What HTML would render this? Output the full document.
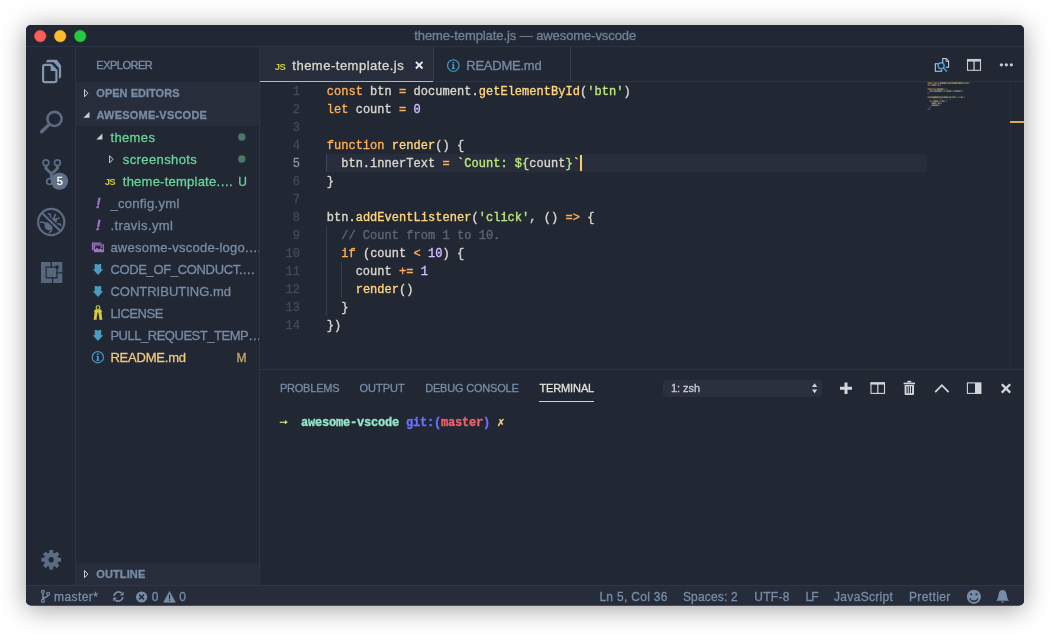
<!DOCTYPE html>
<html lang="en"><head><meta charset="utf-8"><title>theme-template.js — awesome-vscode</title>
<style>
*{margin:0;padding:0;box-sizing:border-box}
html,body{width:1050px;height:634px;overflow:hidden;background:#fff}
body{position:relative;font-family:"Liberation Sans", sans-serif;-webkit-font-smoothing:antialiased}
.abs,.t,.ln,.cl{position:absolute}
.t{white-space:nowrap;display:block;height:20px;line-height:20px;font-family:"Liberation Sans", sans-serif}
#root{position:absolute;left:0;top:0;width:1050px;height:634px;will-change:transform;-webkit-text-stroke:0.3px}
#win{position:absolute;left:26px;top:25px;width:998px;height:580.5px;border-radius:5px;background:#212733;overflow:hidden;}
#shadow{position:absolute;left:26px;top:25px;width:998px;height:580px;background:#212733;border-radius:5px;box-shadow:0 3.5px 26px rgba(0,0,0,.38);}
.ln{left:270px;width:30px;height:18px;text-align:right;font:400 12px/18px "Liberation Mono", "DejaVu Sans Mono", monospace;color:#414b5c}
.ln.act{color:#8c939e}
.cl{left:326.7px;height:18px;font:400 12px/18px "Liberation Mono", "DejaVu Sans Mono", monospace;white-space:pre;letter-spacing:0.035px;color:#d9d7ce;-webkit-text-stroke:0.35px}
.term{font:700 12px/18px "Liberation Mono", "DejaVu Sans Mono", monospace;white-space:pre;letter-spacing:-0.2px}
</style></head>
<body>
<div id="root">
<div id="shadow"></div>
<svg class="abs" style="left:0;top:0" width="1050" height="634"><rect x="26" y="25" width="998" height="580.5" rx="5" fill="#212733"/></svg>
<!-- chrome lines / panels (page coordinates) -->
<div class="abs" style="left:26px;top:46px;width:998px;height:1px;background:#2d3544"></div>
<div class="abs" style="left:75px;top:47px;width:1px;height:538px;background:#2d3544"></div>
<div class="abs" style="left:259px;top:47px;width:1px;height:538px;background:#2d3544"></div>
<div class="abs" style="left:76px;top:82px;width:183px;height:44px;background:#272d3a"></div>
<div class="abs" style="left:76px;top:563px;width:183px;height:22px;background:#272d3a"></div>
<!-- tabs -->
<div class="abs" style="left:260px;top:47px;width:173px;height:34px;background:#272d3a"></div>
<div class="abs" style="left:433px;top:47px;width:1px;height:35px;background:#343e4f"></div>
<div class="abs" style="left:570px;top:47px;width:1px;height:35px;background:#343e4f"></div>
<div class="abs" style="left:260px;top:81px;width:764px;height:1px;background:#2d3544"></div>
<div class="abs" style="left:260px;top:81px;width:173px;height:1px;background:#e6b450"></div>
<!-- editor -->
<div class="abs" style="left:326px;top:154px;width:601px;height:18px;background:#272d3a"></div>
<div class="abs" style="left:326px;top:154px;width:1px;height:18px;background:#3d4759"></div>
<div class="abs" style="left:326px;top:226px;width:1px;height:90px;background:#333d4e"></div>
<div class="abs" style="left:341px;top:262px;width:1px;height:36px;background:#333d4e"></div>
<div class="abs" style="left:579.5px;top:155px;width:2px;height:16px;background:#ffcc66"></div>
<div class="abs" style="left:1010px;top:82px;width:1px;height:287px;background:#272e3b"></div>
<div class="abs" style="left:1010px;top:121px;width:14px;height:2px;background:#dcab4e"></div>
<div class="ln" style="top:83px">1</div>
<div class="cl" style="top:83px"><span style="color:#ffae57">const</span><span style="color:#d9d7ce"> btn </span><span style="color:#ffae57">=</span><span style="color:#d9d7ce"> document.</span><span style="color:#ffd57f">getElementById</span><span style="color:#d9d7ce">(</span><span style="color:#bbe67e">'btn'</span><span style="color:#d9d7ce">)</span></div>
<div class="ln" style="top:101px">2</div>
<div class="cl" style="top:101px"><span style="color:#ffae57">let</span><span style="color:#d9d7ce"> count </span><span style="color:#ffae57">=</span><span style="color:#d9d7ce"> </span><span style="color:#d4bfff">0</span></div>
<div class="ln" style="top:119px">3</div>
<div class="ln" style="top:137px">4</div>
<div class="cl" style="top:137px"><span style="color:#ffae57">function</span><span style="color:#d9d7ce"> </span><span style="color:#ffd57f">render</span><span style="color:#d9d7ce">() {</span></div>
<div class="ln act" style="top:155px">5</div>
<div class="cl" style="top:155px"><span style="color:#d9d7ce">  btn.innerText </span><span style="color:#ffae57">=</span><span style="color:#d9d7ce"> </span><span style="color:#bbe67e">`Count: ${</span><span style="color:#d9d7ce">count</span><span style="color:#bbe67e">}`</span></div>
<div class="ln" style="top:173px">6</div>
<div class="cl" style="top:173px"><span style="color:#d9d7ce">}</span></div>
<div class="ln" style="top:191px">7</div>
<div class="ln" style="top:209px">8</div>
<div class="cl" style="top:209px"><span style="color:#d9d7ce">btn.</span><span style="color:#ffd57f">addEventListener</span><span style="color:#d9d7ce">(</span><span style="color:#bbe67e">'click'</span><span style="color:#d9d7ce">, () </span><span style="color:#ffae57">=&gt;</span><span style="color:#d9d7ce"> {</span></div>
<div class="ln" style="top:227px">9</div>
<div class="cl" style="top:227px"><span style="color:#5c6773">  // Count from 1 to 10.</span></div>
<div class="ln" style="top:245px">10</div>
<div class="cl" style="top:245px"><span style="color:#d9d7ce">  </span><span style="color:#ffae57">if</span><span style="color:#d9d7ce"> (count </span><span style="color:#ffae57">&lt;</span><span style="color:#d9d7ce"> </span><span style="color:#d4bfff">10</span><span style="color:#d9d7ce">) {</span></div>
<div class="ln" style="top:263px">11</div>
<div class="cl" style="top:263px"><span style="color:#d9d7ce">    count </span><span style="color:#ffae57">+=</span><span style="color:#d9d7ce"> </span><span style="color:#d4bfff">1</span></div>
<div class="ln" style="top:281px">12</div>
<div class="cl" style="top:281px"><span style="color:#d9d7ce">    </span><span style="color:#ffd57f">render</span><span style="color:#d9d7ce">()</span></div>
<div class="ln" style="top:299px">13</div>
<div class="cl" style="top:299px"><span style="color:#d9d7ce">  }</span></div>
<div class="ln" style="top:317px">14</div>
<div class="cl" style="top:317px"><span style="color:#d9d7ce">})</span></div>
<svg class="abs" style="left:0;top:0" width="1050" height="634"><rect x="927.70" y="82.30" width="0.80" height="1.5" fill="#ffae57" opacity="0.72"/><rect x="928.70" y="82.30" width="0.80" height="1.5" fill="#ffae57" opacity="0.72"/><rect x="929.70" y="82.30" width="0.80" height="1.5" fill="#ffae57" opacity="0.72"/><rect x="930.70" y="82.30" width="0.80" height="1.5" fill="#ffae57" opacity="0.72"/><rect x="931.70" y="82.30" width="0.80" height="1.5" fill="#ffae57" opacity="0.42"/><rect x="933.70" y="82.30" width="0.80" height="1.5" fill="#d9d7ce" opacity="0.72"/><rect x="934.70" y="82.30" width="0.80" height="1.5" fill="#d9d7ce" opacity="0.42"/><rect x="935.70" y="82.30" width="0.80" height="1.5" fill="#d9d7ce" opacity="0.72"/><rect x="937.70" y="82.30" width="0.80" height="1.5" fill="#ffae57" opacity="0.95"/><rect x="939.70" y="82.30" width="0.80" height="1.5" fill="#d9d7ce" opacity="0.72"/><rect x="940.70" y="82.30" width="0.80" height="1.5" fill="#d9d7ce" opacity="0.72"/><rect x="941.70" y="82.30" width="0.80" height="1.5" fill="#d9d7ce" opacity="0.72"/><rect x="942.70" y="82.30" width="0.80" height="1.5" fill="#d9d7ce" opacity="0.72"/><rect x="943.70" y="82.30" width="0.80" height="1.5" fill="#d9d7ce" opacity="0.95"/><rect x="944.70" y="82.30" width="0.80" height="1.5" fill="#d9d7ce" opacity="0.72"/><rect x="945.70" y="82.30" width="0.80" height="1.5" fill="#d9d7ce" opacity="0.72"/><rect x="946.70" y="82.30" width="0.80" height="1.5" fill="#d9d7ce" opacity="0.42"/><rect x="947.70" y="82.30" width="0.80" height="1.5" fill="#d9d7ce" opacity="0.42"/><rect x="948.70" y="82.30" width="0.80" height="1.5" fill="#ffd57f" opacity="0.72"/><rect x="949.70" y="82.30" width="0.80" height="1.5" fill="#ffd57f" opacity="0.72"/><rect x="950.70" y="82.30" width="0.80" height="1.5" fill="#ffd57f" opacity="0.42"/><rect x="951.70" y="82.30" width="0.80" height="1.5" fill="#ffd57f" opacity="0.95"/><rect x="952.70" y="82.30" width="0.80" height="1.5" fill="#ffd57f" opacity="0.42"/><rect x="953.70" y="82.30" width="0.80" height="1.5" fill="#ffd57f" opacity="0.72"/><rect x="954.70" y="82.30" width="0.80" height="1.5" fill="#ffd57f" opacity="0.95"/><rect x="955.70" y="82.30" width="0.80" height="1.5" fill="#ffd57f" opacity="0.72"/><rect x="956.70" y="82.30" width="0.80" height="1.5" fill="#ffd57f" opacity="0.72"/><rect x="957.70" y="82.30" width="0.80" height="1.5" fill="#ffd57f" opacity="0.42"/><rect x="958.70" y="82.30" width="0.80" height="1.5" fill="#ffd57f" opacity="0.95"/><rect x="959.70" y="82.30" width="0.80" height="1.5" fill="#ffd57f" opacity="0.72"/><rect x="960.70" y="82.30" width="0.80" height="1.5" fill="#ffd57f" opacity="0.72"/><rect x="961.70" y="82.30" width="0.80" height="1.5" fill="#ffd57f" opacity="0.72"/><rect x="962.70" y="82.30" width="0.80" height="1.5" fill="#d9d7ce" opacity="0.42"/><rect x="963.70" y="82.30" width="0.80" height="1.5" fill="#bbe67e" opacity="0.42"/><rect x="964.70" y="82.30" width="0.80" height="1.5" fill="#bbe67e" opacity="0.72"/><rect x="965.70" y="82.30" width="0.80" height="1.5" fill="#bbe67e" opacity="0.42"/><rect x="966.70" y="82.30" width="0.80" height="1.5" fill="#bbe67e" opacity="0.72"/><rect x="967.70" y="82.30" width="0.80" height="1.5" fill="#bbe67e" opacity="0.42"/><rect x="968.70" y="82.30" width="0.80" height="1.5" fill="#d9d7ce" opacity="0.42"/><rect x="927.70" y="84.32" width="0.80" height="1.5" fill="#ffae57" opacity="0.42"/><rect x="928.70" y="84.32" width="0.80" height="1.5" fill="#ffae57" opacity="0.72"/><rect x="929.70" y="84.32" width="0.80" height="1.5" fill="#ffae57" opacity="0.42"/><rect x="931.70" y="84.32" width="0.80" height="1.5" fill="#d9d7ce" opacity="0.72"/><rect x="932.70" y="84.32" width="0.80" height="1.5" fill="#d9d7ce" opacity="0.72"/><rect x="933.70" y="84.32" width="0.80" height="1.5" fill="#d9d7ce" opacity="0.72"/><rect x="934.70" y="84.32" width="0.80" height="1.5" fill="#d9d7ce" opacity="0.72"/><rect x="935.70" y="84.32" width="0.80" height="1.5" fill="#d9d7ce" opacity="0.42"/><rect x="937.70" y="84.32" width="0.80" height="1.5" fill="#ffae57" opacity="0.95"/><rect x="939.70" y="84.32" width="0.80" height="1.5" fill="#d4bfff" opacity="0.72"/><rect x="927.70" y="88.36" width="0.80" height="1.5" fill="#ffae57" opacity="0.72"/><rect x="928.70" y="88.36" width="0.80" height="1.5" fill="#ffae57" opacity="0.72"/><rect x="929.70" y="88.36" width="0.80" height="1.5" fill="#ffae57" opacity="0.72"/><rect x="930.70" y="88.36" width="0.80" height="1.5" fill="#ffae57" opacity="0.72"/><rect x="931.70" y="88.36" width="0.80" height="1.5" fill="#ffae57" opacity="0.42"/><rect x="932.70" y="88.36" width="0.80" height="1.5" fill="#ffae57" opacity="0.42"/><rect x="933.70" y="88.36" width="0.80" height="1.5" fill="#ffae57" opacity="0.72"/><rect x="934.70" y="88.36" width="0.80" height="1.5" fill="#ffae57" opacity="0.72"/><rect x="936.70" y="88.36" width="0.80" height="1.5" fill="#ffd57f" opacity="0.72"/><rect x="937.70" y="88.36" width="0.80" height="1.5" fill="#ffd57f" opacity="0.72"/><rect x="938.70" y="88.36" width="0.80" height="1.5" fill="#ffd57f" opacity="0.72"/><rect x="939.70" y="88.36" width="0.80" height="1.5" fill="#ffd57f" opacity="0.72"/><rect x="940.70" y="88.36" width="0.80" height="1.5" fill="#ffd57f" opacity="0.72"/><rect x="941.70" y="88.36" width="0.80" height="1.5" fill="#ffd57f" opacity="0.72"/><rect x="942.70" y="88.36" width="0.80" height="1.5" fill="#d9d7ce" opacity="0.42"/><rect x="943.70" y="88.36" width="0.80" height="1.5" fill="#d9d7ce" opacity="0.42"/><rect x="945.70" y="88.36" width="0.80" height="1.5" fill="#d9d7ce" opacity="0.42"/><rect x="929.70" y="90.38" width="0.80" height="1.5" fill="#d9d7ce" opacity="0.72"/><rect x="930.70" y="90.38" width="0.80" height="1.5" fill="#d9d7ce" opacity="0.42"/><rect x="931.70" y="90.38" width="0.80" height="1.5" fill="#d9d7ce" opacity="0.72"/><rect x="932.70" y="90.38" width="0.80" height="1.5" fill="#d9d7ce" opacity="0.42"/><rect x="933.70" y="90.38" width="0.80" height="1.5" fill="#d9d7ce" opacity="0.42"/><rect x="934.70" y="90.38" width="0.80" height="1.5" fill="#d9d7ce" opacity="0.72"/><rect x="935.70" y="90.38" width="0.80" height="1.5" fill="#d9d7ce" opacity="0.72"/><rect x="936.70" y="90.38" width="0.80" height="1.5" fill="#d9d7ce" opacity="0.72"/><rect x="937.70" y="90.38" width="0.80" height="1.5" fill="#d9d7ce" opacity="0.72"/><rect x="938.70" y="90.38" width="0.80" height="1.5" fill="#d9d7ce" opacity="0.72"/><rect x="939.70" y="90.38" width="0.80" height="1.5" fill="#d9d7ce" opacity="0.72"/><rect x="940.70" y="90.38" width="0.80" height="1.5" fill="#d9d7ce" opacity="0.72"/><rect x="941.70" y="90.38" width="0.80" height="1.5" fill="#d9d7ce" opacity="0.42"/><rect x="943.70" y="90.38" width="0.80" height="1.5" fill="#ffae57" opacity="0.95"/><rect x="945.70" y="90.38" width="0.80" height="1.5" fill="#bbe67e" opacity="0.42"/><rect x="946.70" y="90.38" width="0.80" height="1.5" fill="#bbe67e" opacity="0.72"/><rect x="947.70" y="90.38" width="0.80" height="1.5" fill="#bbe67e" opacity="0.72"/><rect x="948.70" y="90.38" width="0.80" height="1.5" fill="#bbe67e" opacity="0.72"/><rect x="949.70" y="90.38" width="0.80" height="1.5" fill="#bbe67e" opacity="0.72"/><rect x="950.70" y="90.38" width="0.80" height="1.5" fill="#bbe67e" opacity="0.42"/><rect x="951.70" y="90.38" width="0.80" height="1.5" fill="#bbe67e" opacity="0.42"/><rect x="953.70" y="90.38" width="0.80" height="1.5" fill="#bbe67e" opacity="0.72"/><rect x="954.70" y="90.38" width="0.80" height="1.5" fill="#bbe67e" opacity="0.42"/><rect x="955.70" y="90.38" width="0.80" height="1.5" fill="#d9d7ce" opacity="0.72"/><rect x="956.70" y="90.38" width="0.80" height="1.5" fill="#d9d7ce" opacity="0.72"/><rect x="957.70" y="90.38" width="0.80" height="1.5" fill="#d9d7ce" opacity="0.72"/><rect x="958.70" y="90.38" width="0.80" height="1.5" fill="#d9d7ce" opacity="0.72"/><rect x="959.70" y="90.38" width="0.80" height="1.5" fill="#d9d7ce" opacity="0.42"/><rect x="960.70" y="90.38" width="0.80" height="1.5" fill="#bbe67e" opacity="0.42"/><rect x="961.70" y="90.38" width="0.80" height="1.5" fill="#bbe67e" opacity="0.42"/><rect x="927.70" y="92.40" width="0.80" height="1.5" fill="#d9d7ce" opacity="0.42"/><rect x="927.70" y="96.44" width="0.80" height="1.5" fill="#d9d7ce" opacity="0.72"/><rect x="928.70" y="96.44" width="0.80" height="1.5" fill="#d9d7ce" opacity="0.42"/><rect x="929.70" y="96.44" width="0.80" height="1.5" fill="#d9d7ce" opacity="0.72"/><rect x="930.70" y="96.44" width="0.80" height="1.5" fill="#d9d7ce" opacity="0.42"/><rect x="931.70" y="96.44" width="0.80" height="1.5" fill="#ffd57f" opacity="0.72"/><rect x="932.70" y="96.44" width="0.80" height="1.5" fill="#ffd57f" opacity="0.72"/><rect x="933.70" y="96.44" width="0.80" height="1.5" fill="#ffd57f" opacity="0.72"/><rect x="934.70" y="96.44" width="0.80" height="1.5" fill="#ffd57f" opacity="0.95"/><rect x="935.70" y="96.44" width="0.80" height="1.5" fill="#ffd57f" opacity="0.72"/><rect x="936.70" y="96.44" width="0.80" height="1.5" fill="#ffd57f" opacity="0.72"/><rect x="937.70" y="96.44" width="0.80" height="1.5" fill="#ffd57f" opacity="0.72"/><rect x="938.70" y="96.44" width="0.80" height="1.5" fill="#ffd57f" opacity="0.42"/><rect x="939.70" y="96.44" width="0.80" height="1.5" fill="#ffd57f" opacity="0.72"/><rect x="940.70" y="96.44" width="0.80" height="1.5" fill="#ffd57f" opacity="0.42"/><rect x="941.70" y="96.44" width="0.80" height="1.5" fill="#ffd57f" opacity="0.72"/><rect x="942.70" y="96.44" width="0.80" height="1.5" fill="#ffd57f" opacity="0.42"/><rect x="943.70" y="96.44" width="0.80" height="1.5" fill="#ffd57f" opacity="0.72"/><rect x="944.70" y="96.44" width="0.80" height="1.5" fill="#ffd57f" opacity="0.72"/><rect x="945.70" y="96.44" width="0.80" height="1.5" fill="#ffd57f" opacity="0.72"/><rect x="946.70" y="96.44" width="0.80" height="1.5" fill="#ffd57f" opacity="0.72"/><rect x="947.70" y="96.44" width="0.80" height="1.5" fill="#d9d7ce" opacity="0.42"/><rect x="948.70" y="96.44" width="0.80" height="1.5" fill="#bbe67e" opacity="0.42"/><rect x="949.70" y="96.44" width="0.80" height="1.5" fill="#bbe67e" opacity="0.72"/><rect x="950.70" y="96.44" width="0.80" height="1.5" fill="#bbe67e" opacity="0.42"/><rect x="951.70" y="96.44" width="0.80" height="1.5" fill="#bbe67e" opacity="0.42"/><rect x="952.70" y="96.44" width="0.80" height="1.5" fill="#bbe67e" opacity="0.72"/><rect x="953.70" y="96.44" width="0.80" height="1.5" fill="#bbe67e" opacity="0.72"/><rect x="954.70" y="96.44" width="0.80" height="1.5" fill="#bbe67e" opacity="0.42"/><rect x="955.70" y="96.44" width="0.80" height="1.5" fill="#d9d7ce" opacity="0.42"/><rect x="957.70" y="96.44" width="0.80" height="1.5" fill="#d9d7ce" opacity="0.42"/><rect x="958.70" y="96.44" width="0.80" height="1.5" fill="#d9d7ce" opacity="0.42"/><rect x="960.70" y="96.44" width="0.80" height="1.5" fill="#ffae57" opacity="0.95"/><rect x="961.70" y="96.44" width="0.80" height="1.5" fill="#ffae57" opacity="0.72"/><rect x="963.70" y="96.44" width="0.80" height="1.5" fill="#d9d7ce" opacity="0.42"/><rect x="929.70" y="98.46" width="0.80" height="1.5" fill="#5c6773" opacity="0.25"/><rect x="930.70" y="98.46" width="0.80" height="1.5" fill="#5c6773" opacity="0.25"/><rect x="932.70" y="98.46" width="0.80" height="1.5" fill="#5c6773" opacity="0.43"/><rect x="933.70" y="98.46" width="0.80" height="1.5" fill="#5c6773" opacity="0.43"/><rect x="934.70" y="98.46" width="0.80" height="1.5" fill="#5c6773" opacity="0.43"/><rect x="935.70" y="98.46" width="0.80" height="1.5" fill="#5c6773" opacity="0.43"/><rect x="936.70" y="98.46" width="0.80" height="1.5" fill="#5c6773" opacity="0.25"/><rect x="938.70" y="98.46" width="0.80" height="1.5" fill="#5c6773" opacity="0.43"/><rect x="939.70" y="98.46" width="0.80" height="1.5" fill="#5c6773" opacity="0.43"/><rect x="940.70" y="98.46" width="0.80" height="1.5" fill="#5c6773" opacity="0.43"/><rect x="941.70" y="98.46" width="0.80" height="1.5" fill="#5c6773" opacity="0.57"/><rect x="943.70" y="98.46" width="0.80" height="1.5" fill="#5c6773" opacity="0.43"/><rect x="945.70" y="98.46" width="0.80" height="1.5" fill="#5c6773" opacity="0.25"/><rect x="946.70" y="98.46" width="0.80" height="1.5" fill="#5c6773" opacity="0.43"/><rect x="948.70" y="98.46" width="0.80" height="1.5" fill="#5c6773" opacity="0.43"/><rect x="949.70" y="98.46" width="0.80" height="1.5" fill="#5c6773" opacity="0.43"/><rect x="950.70" y="98.46" width="0.80" height="1.5" fill="#5c6773" opacity="0.25"/><rect x="929.70" y="100.48" width="0.80" height="1.5" fill="#ffae57" opacity="0.42"/><rect x="930.70" y="100.48" width="0.80" height="1.5" fill="#ffae57" opacity="0.72"/><rect x="932.70" y="100.48" width="0.80" height="1.5" fill="#d9d7ce" opacity="0.42"/><rect x="933.70" y="100.48" width="0.80" height="1.5" fill="#d9d7ce" opacity="0.72"/><rect x="934.70" y="100.48" width="0.80" height="1.5" fill="#d9d7ce" opacity="0.72"/><rect x="935.70" y="100.48" width="0.80" height="1.5" fill="#d9d7ce" opacity="0.72"/><rect x="936.70" y="100.48" width="0.80" height="1.5" fill="#d9d7ce" opacity="0.72"/><rect x="937.70" y="100.48" width="0.80" height="1.5" fill="#d9d7ce" opacity="0.42"/><rect x="939.70" y="100.48" width="0.80" height="1.5" fill="#ffae57" opacity="0.72"/><rect x="941.70" y="100.48" width="0.80" height="1.5" fill="#d4bfff" opacity="0.72"/><rect x="942.70" y="100.48" width="0.80" height="1.5" fill="#d4bfff" opacity="0.72"/><rect x="943.70" y="100.48" width="0.80" height="1.5" fill="#d9d7ce" opacity="0.42"/><rect x="945.70" y="100.48" width="0.80" height="1.5" fill="#d9d7ce" opacity="0.42"/><rect x="931.70" y="102.50" width="0.80" height="1.5" fill="#d9d7ce" opacity="0.72"/><rect x="932.70" y="102.50" width="0.80" height="1.5" fill="#d9d7ce" opacity="0.72"/><rect x="933.70" y="102.50" width="0.80" height="1.5" fill="#d9d7ce" opacity="0.72"/><rect x="934.70" y="102.50" width="0.80" height="1.5" fill="#d9d7ce" opacity="0.72"/><rect x="935.70" y="102.50" width="0.80" height="1.5" fill="#d9d7ce" opacity="0.42"/><rect x="937.70" y="102.50" width="0.80" height="1.5" fill="#ffae57" opacity="0.72"/><rect x="938.70" y="102.50" width="0.80" height="1.5" fill="#ffae57" opacity="0.95"/><rect x="940.70" y="102.50" width="0.80" height="1.5" fill="#d4bfff" opacity="0.72"/><rect x="931.70" y="104.52" width="0.80" height="1.5" fill="#ffd57f" opacity="0.72"/><rect x="932.70" y="104.52" width="0.80" height="1.5" fill="#ffd57f" opacity="0.72"/><rect x="933.70" y="104.52" width="0.80" height="1.5" fill="#ffd57f" opacity="0.72"/><rect x="934.70" y="104.52" width="0.80" height="1.5" fill="#ffd57f" opacity="0.72"/><rect x="935.70" y="104.52" width="0.80" height="1.5" fill="#ffd57f" opacity="0.72"/><rect x="936.70" y="104.52" width="0.80" height="1.5" fill="#ffd57f" opacity="0.72"/><rect x="937.70" y="104.52" width="0.80" height="1.5" fill="#d9d7ce" opacity="0.42"/><rect x="938.70" y="104.52" width="0.80" height="1.5" fill="#d9d7ce" opacity="0.42"/><rect x="929.70" y="106.54" width="0.80" height="1.5" fill="#d9d7ce" opacity="0.42"/><rect x="927.70" y="108.56" width="0.80" height="1.5" fill="#d9d7ce" opacity="0.42"/><rect x="928.70" y="108.56" width="0.80" height="1.5" fill="#d9d7ce" opacity="0.42"/></svg>
<!-- panel -->
<div class="abs" style="left:260px;top:369px;width:764px;height:1px;background:#2d3544"></div>
<div class="abs" style="left:539.4px;top:401px;width:54.8px;height:1px;background:#ffcc66"></div>
<div class="abs" style="left:663px;top:379.5px;width:159px;height:17.5px;border-radius:4px;background:#2a303d"></div>
<div class="abs term" style="left:280px;top:413px;height:18px;transform:translateY(0.7px)"><span style="color:#bbe67e;position:relative;top:-2px;-webkit-text-stroke:0.6px">→</span>  <span style="color:#95e6cb">awesome-vscode</span> <span style="color:#6871ff">git:(</span><span style="color:#f0616d">master</span><span style="color:#6871ff">)</span> <span style="color:#ffd57f">✗</span></div>
<!-- status bar -->
<svg class="abs" style="left:0;top:0" width="1050" height="634"><path d="M26 585 H1024 V600.5 A5 5 0 0 1 1019 605.5 H31 A5 5 0 0 1 26 600.5 Z" fill="#262c39"/></svg>
<div class="abs" style="left:26px;top:585px;width:998px;height:1px;background:#2f3847"></div>
<svg class="abs" style="left:0;top:0" width="1050" height="634" viewBox="0 0 1050 634" fill="none">
<!-- traffic lights -->
<circle cx="40.2" cy="36.1" r="5.85" fill="#fd5e57" stroke="#e2463f" stroke-width="0.5"/>
<circle cx="60.2" cy="36.1" r="5.85" fill="#febc2e" stroke="#e0a028" stroke-width="0.5"/>
<circle cx="80.2" cy="36.1" r="5.85" fill="#28c840" stroke="#1fab2f" stroke-width="0.5"/>
<!-- explorer icon -->
<g id="ic-files">
<path d="M43.1 66.6 Q43.1 64.9 44.8 64.9 L51 64.9 L56.4 70.6 L56.4 80.5 Q56.4 82.2 54.7 82.2 L44.8 82.2 Q43.1 82.2 43.1 80.5 Z" stroke="#8196b0" stroke-width="2.2" stroke-linejoin="round"/>
<path d="M50.6 64.9 L50.6 71 L56.4 71 Z" fill="#8196b0"/>
<path d="M47.2 59.8 L56.8 59.8 L61.1 65.6 L61.1 77 L58.9 79 L58.9 68 L53.6 62.3 L46 62.3 Z" fill="#8196b0"/>
</g>
<!-- search icon -->
<g id="ic-search" stroke="#5b6c84" stroke-linecap="round">
<circle cx="54.5" cy="118.9" r="7.05" stroke-width="2.6"/>
<path d="M49 124.6 L41.6 131.8" stroke-width="3.4"/>
</g>
<!-- git icon -->
<g id="ic-git" stroke="#5b6c84">
<circle cx="45.9" cy="162.8" r="2.9" stroke-width="1.7"/>
<circle cx="57.4" cy="162.8" r="2.9" stroke-width="1.7"/>
<circle cx="49.6" cy="181.6" r="2.9" stroke-width="1.7"/>
<path d="M45.9 166 L45.9 168.5 L51.4 173.6 L51.4 178.5 M57.4 166 L57.4 168.5 L51.9 173.6" stroke-width="3" stroke-linejoin="round"/>
</g>
<circle cx="59.5" cy="181.1" r="8.7" fill="#5f7088"/>
<!-- debug icon -->
<g id="ic-debug">
<g stroke="#5b6c84" stroke-width="1.5" stroke-linecap="round">
<path d="M40.6 222.3 L43.8 222.3 L45.6 223.8 M49.4 232.4 L51.4 230.8 L51.6 228.4 M48.2 213.8 L50.2 214.4 L50.8 217.6 M55.6 214.4 L54.2 217.4 M59 218 L56 219.2 M56.6 224 L60 224 L60.8 225.6"/>
</g>
<ellipse cx="48.6" cy="226.2" rx="3.9" ry="4.4" fill="#5b6c84" transform="rotate(-40 48.6 226.2)"/>
<ellipse cx="54" cy="220.6" rx="2.6" ry="3" fill="#5b6c84" transform="rotate(-40 54 220.6)"/>
<path d="M42.6 213.6 L59.8 230.4" stroke="#212733" stroke-width="5"/>
<path d="M41.8 212.8 L60.6 231.2" stroke="#5b6c84" stroke-width="2.3"/>
<circle cx="51.2" cy="222" r="13.1" stroke="#5b6c84" stroke-width="2.2"/>
</g>
<!-- extensions icon -->
<g id="ic-ext" fill="#56667c">
<path fill-rule="evenodd" d="M41 262 H62.3 V283 H41 Z M45.6 266.5 V278.4 H57.6 V266.5 Z"/>
<rect x="46.7" y="267.7" width="9.7" height="9.5"/>
</g>
<g fill="#212733">
<rect x="50.5" y="261.5" width="1.3" height="6.2"/>
<rect x="52" y="277.2" width="1.2" height="6.3"/>
<rect x="56.4" y="272.3" width="6.4" height="1.2"/>
<rect x="55.6" y="265.4" width="3" height="3.4"/>
</g>
<!-- gear -->
<g id="ic-gear" transform="translate(51.2 559.8)" fill="#5b6c84">
<path fill-rule="evenodd" d="M0 -7.2 A7.2 7.2 0 1 0 0.001 -7.2 Z M0 -2.7 A2.7 2.7 0 1 1 -0.001 -2.7 Z"/>
<g id="teeth">
<rect x="-2" y="-9.8" width="4" height="4" rx="0.6"/>
<rect x="-2" y="5.8" width="4" height="4" rx="0.6"/>
<rect x="-9.8" y="-2" width="4" height="4" rx="0.6"/>
<rect x="5.8" y="-2" width="4" height="4" rx="0.6"/>
<g transform="rotate(45)">
<rect x="-2" y="-9.8" width="4" height="4" rx="0.6"/>
<rect x="-2" y="5.8" width="4" height="4" rx="0.6"/>
<rect x="-9.8" y="-2" width="4" height="4" rx="0.6"/>
<rect x="5.8" y="-2" width="4" height="4" rx="0.6"/>
</g>
</g>
</g>

<path d="M84.5 89.60000000000001 L87.9 93.2 L84.5 96.8 Z" stroke="#cfcfcf" stroke-width="1" stroke-linejoin="round"/>
<path d="M89.5 111.8 L89.5 117.8 L83.4 117.8 Z" fill="#cfcfcf"/>
<path d="M102.4 133.60000000000002 L102.4 139.60000000000002 L96.30000000000001 139.60000000000002 Z" fill="#cfcfcf"/>
<path d="M109.6 155.70000000000002 L113.0 159.3 L109.6 162.9 Z" stroke="#cfcfcf" stroke-width="1" stroke-linejoin="round"/>
<path d="M84.5 570.5 L87.9 574.1 L84.5 577.7 Z" stroke="#cfcfcf" stroke-width="1" stroke-linejoin="round"/>
<circle cx="241.8" cy="137" r="3.7" fill="#6bd29c" opacity="0.5"/>
<circle cx="241.8" cy="159" r="3.7" fill="#6bd29c" opacity="0.5"/>
<g id="ic-img"><path d="M101.4 243.1 H92.6 V250.2" stroke="#a074c4" stroke-width="1.3"/><path d="M93.2 243.7 H101 V244.4 H93.9 V250 H93.2 Z" fill="#a074c4" opacity="0.55"/><rect x="94.5" y="245" width="8.8" height="6.6" stroke="#a074c4" stroke-width="1.2"/><path d="M94.5 251.6 L94.5 250.2 L97 247.4 L98.8 249.6 L100.4 248.3 L103.3 250.6 L103.3 251.6 Z" fill="#a074c4"/><circle cx="101.3" cy="246.9" r="0.85" fill="#a074c4"/></g>
<g id="ic-key" fill="#d8cd3f"><circle cx="98" cy="307.6" r="1.9" stroke="#d8cd3f" stroke-width="1.1" fill="none"/><circle cx="96.2" cy="311.3" r="1.95"/><circle cx="99.8" cy="311.3" r="1.95"/><path d="M94.6 312.2 L93.9 318.2 L93.5 319.8 L96.8 319.8 L96.6 318.2 L97.6 312.8 Z"/><path d="M98.4 312.8 L99.4 318.2 L99.2 319.8 L102.5 319.8 L102.1 318.2 L101.4 312.2 Z"/></g>
<g><circle cx="97.8" cy="357.2" r="5.6" stroke="#4a9cc1" stroke-width="1.15"/><circle cx="97.8" cy="354.3" r="0.95" fill="#4a9cc1"/><path d="M96.3 355.9 H98.7 V359.8 H99.5 V360.7 H96.1 V359.8 H97.0 V356.8 H96.3 Z" fill="#4a9cc1"/></g>
<g><circle cx="453.3" cy="65.5" r="5.75" stroke="#4a9cc1" stroke-width="1.15"/><circle cx="453.3" cy="62.6" r="0.95" fill="#4a9cc1"/><path d="M451.8 64.2 H454.2 V68.1 H455.0 V69.0 H451.6 V68.1 H452.5 V65.1 H451.8 Z" fill="#4a9cc1"/></g>
<path d="M415.9 61.9 L422.5 68.5 M422.5 61.9 L415.9 68.5" stroke="#e8e8e8" stroke-width="2"/>
<g id="ic-changes"><path d="M942.7 63 V58.5 H946.2 L948.6 61.2 V67.2 H945.6" stroke="#c9cbd0" stroke-width="1.1"/><path d="M946 58.6 V61.4 H948.5" stroke="#c9cbd0" stroke-width="0.9"/><path d="M938.2 63.7 H935.3 V71.2 H941.6 V69.8" stroke="#c9cbd0" stroke-width="1.1"/><circle cx="941.1" cy="65.8" r="3" stroke="#4da3e0" stroke-width="1.4"/><path d="M943.3 68.1 L947 71.6" stroke="#4da3e0" stroke-width="1.4"/></g>
<g id="ic-split"><rect x="967.5" y="59.5" width="13" height="10.8" stroke="#c9cbd0" stroke-width="1.1"/><rect x="967" y="59" width="14" height="2.6" fill="#c9cbd0"/><rect x="973.4" y="60" width="1.3" height="10.5" fill="#c9cbd0"/></g>
<circle cx="1001.4" cy="64.8" r="1.65" fill="#c9cbd0"/>
<circle cx="1006.35" cy="64.8" r="1.65" fill="#c9cbd0"/>
<circle cx="1011.3" cy="64.8" r="1.65" fill="#c9cbd0"/>
<path d="M812 387 L814.6 383.2 L817.2 387 Z M812 389.4 L814.6 393.2 L817.2 389.4 Z" fill="#d4d6da"/>
<path d="M846 382.5 V394 M840 388.2 H852" stroke="#d4d6da" stroke-width="3"/>
<g><rect x="871" y="382.9" width="13.5" height="10.5" stroke="#d4d6da" stroke-width="1.1"/><rect x="870.5" y="382.4" width="14.5" height="2.2" fill="#d4d6da"/><rect x="877.2" y="383" width="1.2" height="10.4" fill="#d4d6da"/></g>
<g id="ic-trash" fill="#d4d6da"><rect x="903.6" y="382.6" width="11.4" height="1.7"/><rect x="907.4" y="380.8" width="3.8" height="1.6"/><path fill-rule="evenodd" d="M904.6 385 H914 V394 Q914 395 913 395 H905.6 Q904.6 395 904.6 394 Z M906.5 386.3 V393.3 H907.6 V386.3 Z M908.75 386.3 V393.3 H909.85 V386.3 Z M911 386.3 V393.3 H912.1 V386.3 Z"/></g>
<path d="M935.2 392.2 L941.9 385.2 L948.6 392.2" stroke="#d4d6da" stroke-width="1.8"/>
<g><rect x="967.4" y="382.9" width="13.5" height="10.5" stroke="#d4d6da" stroke-width="1.1"/><rect x="975" y="383" width="6" height="10.4" fill="#d4d6da"/></g>
<path d="M1001.8 384.2 L1010.2 392.6 M1010.2 384.2 L1001.8 392.6" stroke="#d4d6da" stroke-width="2.3"/>

<g id="ic-branch" stroke="#778ca6" stroke-width="1.2"><circle cx="42.9" cy="591.8" r="1.45"/><circle cx="42.9" cy="600.9" r="1.45"/><circle cx="48.2" cy="593.7" r="1.45"/><path d="M42.9 593.3 V599.4 M48.2 595.2 C48.2 597.6 43.4 597 42.9 599.2" stroke-width="1.5"/></g>
<g id="ic-sync"><path d="M114 596 A4.5 4.5 0 0 1 121.6 593.2 M122.8 597 A4.5 4.5 0 0 1 115.2 599.8" stroke="#778ca6" stroke-width="1.6"/><path d="M123.6 591.6 V595.4 H119.8 Z M113.2 601.4 V597.6 H117 Z" fill="#778ca6"/></g>
<g id="ic-err"><circle cx="141.6" cy="597" r="5.6" fill="#778ca6"/><path d="M139.2 594.6 L144 599.4 M144 594.6 L139.2 599.4" stroke="#262c39" stroke-width="1.5"/></g>
<g id="ic-warn"><path d="M169.5 591.4 L175.4 602.3 H163.6 Z" fill="#778ca6" stroke="#778ca6" stroke-width="0.6" stroke-linejoin="round"/><rect x="168.9" y="594.6" width="1.2" height="4.2" fill="#262c39"/><rect x="168.9" y="599.6" width="1.2" height="1.3" fill="#262c39"/></g>
<g id="ic-smile"><circle cx="973.9" cy="596.8" r="7.1" fill="#778ca6"/><circle cx="971.2" cy="594.3" r="1.05" fill="#262c39"/><circle cx="976.5" cy="594.3" r="1.05" fill="#262c39"/><path d="M969.3 598.3 A4.7 4.7 0 0 0 978.5 598.3 L977.4 598.3 A3.6 2.9 0 0 1 970.4 598.3 Z" fill="#262c39"/></g>
<g id="ic-bell" fill="#778ca6"><path d="M1002.6 590 C1005.8 590 1006.6 593 1006.9 596 C1007.1 598.4 1008 599.6 1009.2 600.8 H996 C997.2 599.6 998.1 598.4 998.3 596 C998.6 593 999.4 590 1002.6 590 Z"/><path d="M1001 601.6 H1004.2 L1002.6 603.2 Z"/></g>
<path d="M94.7 263.9 L97 263.9 L98 265.0 L99 263.9 L101.2 263.9 L101.2 269.3 L103.2 269.3 L98 275.1 L92.8 269.3 L94.7 269.3 Z" fill="#4a9cc1"/>
<path d="M94.7 285.9 L97 285.9 L98 287.0 L99 285.9 L101.2 285.9 L101.2 291.3 L103.2 291.3 L98 297.1 L92.8 291.3 L94.7 291.3 Z" fill="#4a9cc1"/>
<path d="M94.7 329.9 L97 329.9 L98 331.0 L99 329.9 L101.2 329.9 L101.2 335.3 L103.2 335.3 L98 341.1 L92.8 335.3 L94.7 335.3 Z" fill="#4a9cc1"/>
</svg>

<span class="t" id="title" style="left:414.30px;top:26.00px;font-weight:400;font-size:13px;color:#6f8299;letter-spacing:-0.084px;">theme-template.js — awesome-vscode</span>
<span class="t" id="explorer" style="left:96.30px;top:55.30px;font-weight:400;font-size:11px;color:#778ca6;letter-spacing:-0.496px;-webkit-text-stroke:0.4px;">EXPLORER</span>
<span class="t" id="openeds" style="left:96.30px;top:83.00px;font-weight:700;font-size:11px;color:#778ca6;letter-spacing:0.023px;">OPEN EDITORS</span>
<span class="t" id="awesome" style="left:96.50px;top:105.00px;font-weight:700;font-size:11px;color:#778ca6;letter-spacing:0.216px;">AWESOME-VSCODE</span>
<span class="t" id="themes" style="left:110.40px;top:127.00px;font-weight:400;font-size:13px;color:#6bd29c;letter-spacing:0.374px;transform:translateY(0.6px);">themes</span>
<span class="t" id="screens" style="left:122.80px;top:149.00px;font-weight:400;font-size:13px;color:#6bd29c;letter-spacing:0.391px;transform:translateY(0.6px);">screenshots</span>
<span class="t" id="ttjs" style="left:122.80px;top:171.00px;font-weight:400;font-size:13px;color:#6bd29c;letter-spacing:0.236px;transform:translateY(0.6px);">theme-template.…</span>
<span class="t" id="ttU" style="left:238.20px;top:171.00px;font-weight:400;font-size:12px;color:#6bd29c;letter-spacing:0.000px;transform:translateY(0.6px);">U</span>
<span class="t" id="config" style="left:110.40px;top:193.00px;font-weight:400;font-size:13px;color:#778ca6;letter-spacing:0.319px;transform:translateY(0.6px);">_config.yml</span>
<span class="t" id="travis" style="left:110.40px;top:215.00px;font-weight:400;font-size:13px;color:#778ca6;letter-spacing:0.410px;transform:translateY(0.6px);">.travis.yml</span>
<span class="t" id="logo" style="left:110.40px;top:237.00px;font-weight:400;font-size:13px;color:#778ca6;letter-spacing:0.240px;transform:translateY(0.6px);">awesome-vscode-logo.…</span>
<span class="t" id="coc" style="left:110.40px;top:259.00px;font-weight:400;font-size:13px;color:#778ca6;letter-spacing:-0.342px;transform:translateY(0.6px);">CODE_OF_CONDUCT.…</span>
<span class="t" id="contrib" style="left:110.40px;top:281.00px;font-weight:400;font-size:13px;color:#778ca6;letter-spacing:-0.002px;transform:translateY(0.6px);">CONTRIBUTING.md</span>
<span class="t" id="license" style="left:110.40px;top:303.00px;font-weight:400;font-size:13px;color:#778ca6;letter-spacing:-0.422px;transform:translateY(0.6px);">LICENSE</span>
<span class="t" id="prt" style="left:110.40px;top:325.00px;font-weight:400;font-size:13px;color:#778ca6;letter-spacing:-0.476px;transform:translateY(0.6px);">PULL_REQUEST_TEMP…</span>
<span class="t" id="readme" style="left:110.40px;top:347.00px;font-weight:400;font-size:13px;color:#f0c680;letter-spacing:-0.200px;transform:translateY(0.6px);">README.md</span>
<span class="t" id="readmeM" style="left:236.60px;top:347.00px;font-weight:400;font-size:12px;color:#c9a96a;letter-spacing:0.000px;transform:translateY(0.6px);">M</span>
<span class="t" id="outline" style="left:96.30px;top:564.00px;font-weight:700;font-size:11px;color:#778ca6;letter-spacing:0.111px;">OUTLINE</span>
<span class="t" id="tab1" style="left:292.30px;top:55.30px;font-weight:400;font-size:13px;color:#d9d7ce;letter-spacing:0.501px;transform:translateY(0.6px);">theme-template.js</span>
<span class="t" id="tab2" style="left:466.30px;top:55.30px;font-weight:400;font-size:13px;color:#778ca6;letter-spacing:-0.247px;transform:translateY(0.6px);">README.md</span>
<span class="t" id="pprob" style="left:279.90px;top:378.20px;font-weight:400;font-size:11px;color:#778ca6;letter-spacing:-0.205px;">PROBLEMS</span>
<span class="t" id="pout" style="left:359.40px;top:378.20px;font-weight:400;font-size:11px;color:#778ca6;letter-spacing:0.012px;">OUTPUT</span>
<span class="t" id="pdbg" style="left:425.20px;top:378.20px;font-weight:400;font-size:11px;color:#778ca6;letter-spacing:-0.190px;">DEBUG CONSOLE</span>
<span class="t" id="pterm" style="left:539.40px;top:378.20px;font-weight:400;font-size:11px;color:#e4e2da;letter-spacing:-0.110px;">TERMINAL</span>
<span class="t" id="zsh" style="left:671.00px;top:378.20px;font-weight:400;font-size:11px;color:#c8ccd2;letter-spacing:-0.065px;">1: zsh</span>
<span class="t" id="smaster" style="left:54.00px;top:586.60px;font-weight:400;font-size:12px;color:#778ca6;letter-spacing:0.409px;">master*</span>
<span class="t" id="serr" style="left:151.70px;top:586.60px;font-weight:400;font-size:12px;color:#778ca6;letter-spacing:0.000px;">0</span>
<span class="t" id="swarn" style="left:179.30px;top:586.60px;font-weight:400;font-size:12px;color:#778ca6;letter-spacing:0.000px;">0</span>
<span class="t" id="sln" style="left:599.40px;top:586.60px;font-weight:400;font-size:12px;color:#778ca6;letter-spacing:0.303px;">Ln 5, Col 36</span>
<span class="t" id="ssp" style="left:682.90px;top:586.60px;font-weight:400;font-size:12px;color:#778ca6;letter-spacing:0.179px;">Spaces: 2</span>
<span class="t" id="sutf" style="left:754.20px;top:586.60px;font-weight:400;font-size:12px;color:#778ca6;letter-spacing:0.311px;">UTF-8</span>
<span class="t" id="slf" style="left:805.50px;top:586.60px;font-weight:400;font-size:12px;color:#778ca6;letter-spacing:-1.010px;">LF</span>
<span class="t" id="sjs" style="left:834.00px;top:586.60px;font-weight:400;font-size:12px;color:#778ca6;letter-spacing:0.323px;">JavaScript</span>
<span class="t" id="spr" style="left:908.90px;top:586.60px;font-weight:400;font-size:12px;color:#778ca6;letter-spacing:0.388px;">Prettier</span>
<span class="t" id="jsi1" style="left:104.70px;top:171.30px;font-weight:700;font-size:9.5px;color:#cbcb41;letter-spacing:-0.683px;-webkit-text-stroke:0;transform:translateY(0.6px);">JS</span>
<span class="t" id="jsi2" style="left:274.80px;top:55.60px;font-weight:700;font-size:9.5px;color:#cbcb41;letter-spacing:-0.683px;-webkit-text-stroke:0;transform:translateY(0.6px);">JS</span>
<span class="t" id="ex1" style="left:96.00px;top:193.00px;font-weight:700;font-size:14px;color:#a074c4;letter-spacing:0.000px;font-style:italic;">!</span>
<span class="t" id="ex2" style="left:96.00px;top:215.00px;font-weight:700;font-size:14px;color:#a074c4;letter-spacing:0.000px;font-style:italic;">!</span>
<span class="t" id="badge" style="left:56.80px;top:171.20px;font-weight:400;font-size:11px;color:#ffffff;letter-spacing:0.000px;">5</span>
<div class="abs" style="left:259px;top:230px;width:14px;height:120px;background:#212733;border-left:1px solid #2d3544"></div>
</div>
</body></html>
